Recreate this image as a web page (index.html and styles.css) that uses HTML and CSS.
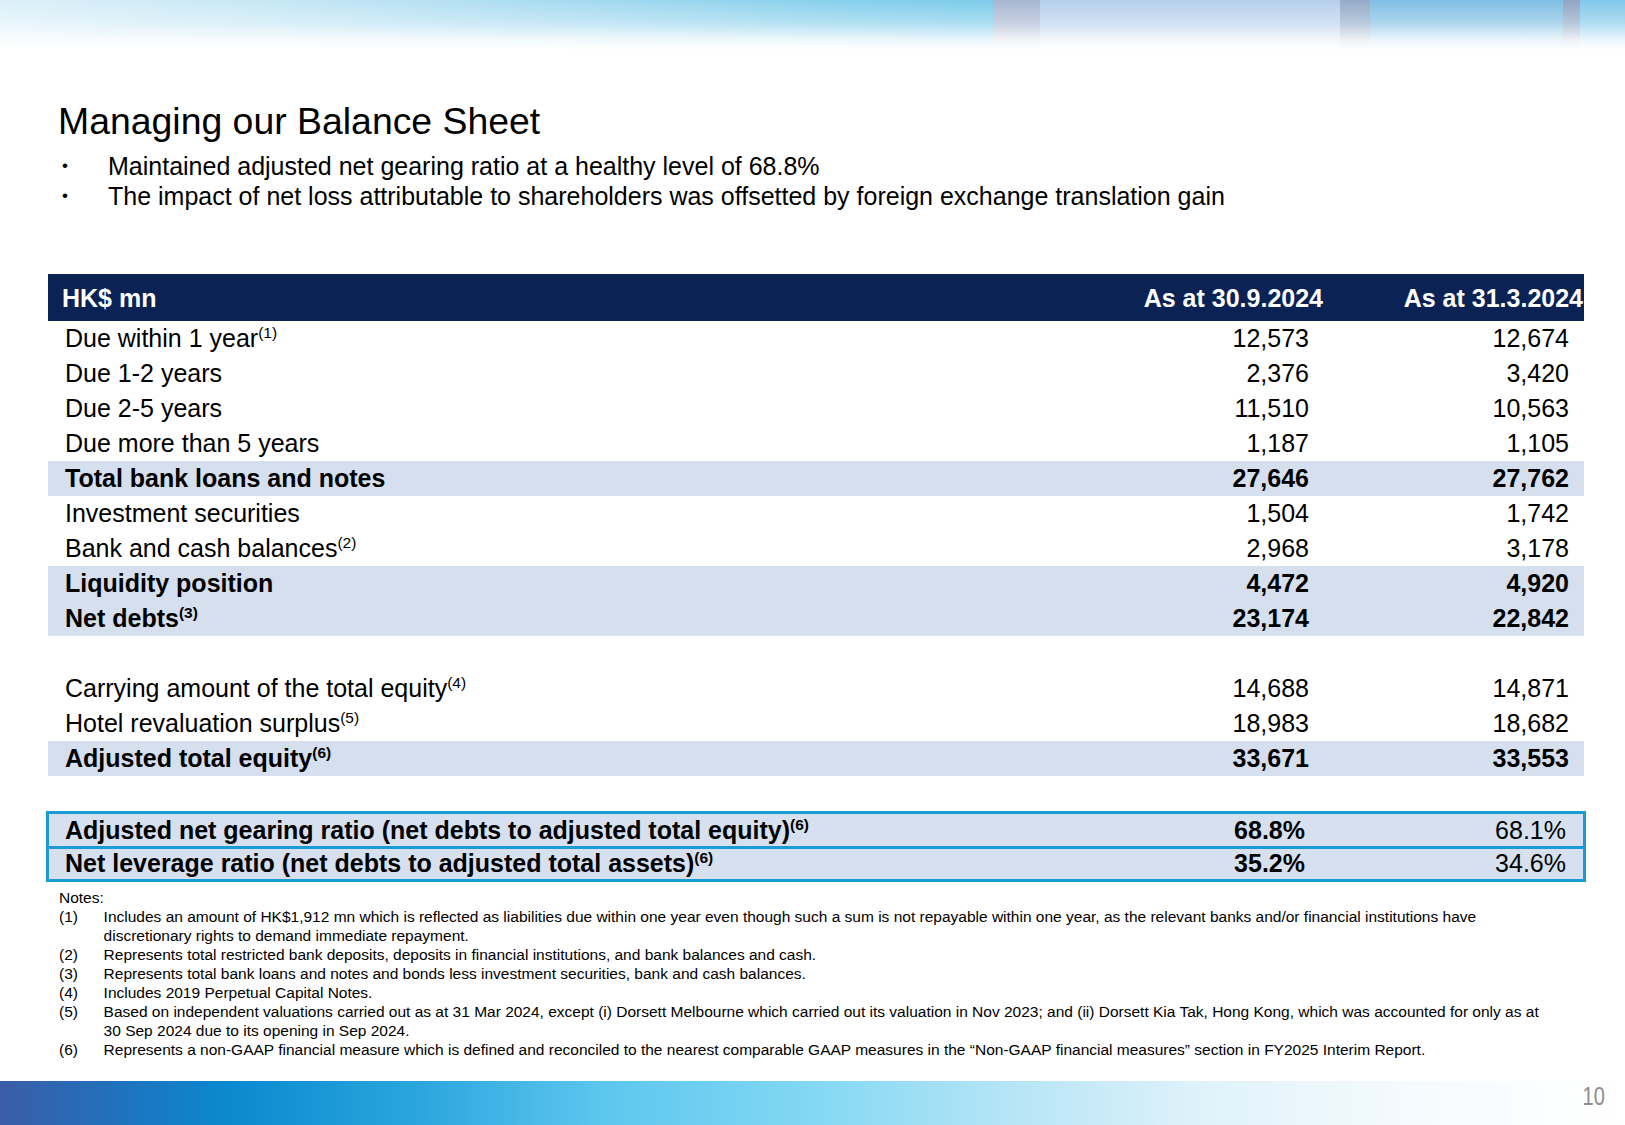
FILE: index.html
```html
<!DOCTYPE html>
<html lang="en">
<head>
<meta charset="utf-8">
<title>Managing our Balance Sheet</title>
<link rel="stylesheet" href="styles.css">
</head>
<body>
<div class="slide">
  <header class="banner"></header>

  <main class="main">
    <h1 class="title">Managing our Balance Sheet</h1>
    <ul class="bullets">
      <li><span class="dot">•</span><span>Maintained adjusted net gearing ratio at a healthy level of 68.8%</span></li>
      <li><span class="dot">•</span><span>The impact of net loss attributable to shareholders was offsetted by foreign exchange translation gain</span></li>
    </ul>

    <section class="table">
      <div class="row head">
        <div class="cell label">HK$ mn</div>
        <div class="cell num">As at 30.9.2024</div>
        <div class="cell num">As at 31.3.2024</div>
      </div>
      <div class="row"><div class="cell label">Due within 1 year<sup>(1)</sup></div><div class="cell num">12,573</div><div class="cell num">12,674</div></div>
      <div class="row"><div class="cell label">Due 1-2 years</div><div class="cell num">2,376</div><div class="cell num">3,420</div></div>
      <div class="row"><div class="cell label">Due 2-5 years</div><div class="cell num">11,510</div><div class="cell num">10,563</div></div>
      <div class="row"><div class="cell label">Due more than 5 years</div><div class="cell num">1,187</div><div class="cell num">1,105</div></div>
      <div class="row band bold"><div class="cell label">Total bank loans and notes</div><div class="cell num">27,646</div><div class="cell num">27,762</div></div>
      <div class="row"><div class="cell label">Investment securities</div><div class="cell num">1,504</div><div class="cell num">1,742</div></div>
      <div class="row"><div class="cell label">Bank and cash balances<sup>(2)</sup></div><div class="cell num">2,968</div><div class="cell num">3,178</div></div>
      <div class="row band bold"><div class="cell label">Liquidity position</div><div class="cell num">4,472</div><div class="cell num">4,920</div></div>
      <div class="row band bold"><div class="cell label">Net debts<sup>(3)</sup></div><div class="cell num">23,174</div><div class="cell num">22,842</div></div>
      <div class="row spacer"></div>
      <div class="row"><div class="cell label">Carrying amount of the total equity<sup>(4)</sup></div><div class="cell num">14,688</div><div class="cell num">14,871</div></div>
      <div class="row"><div class="cell label">Hotel revaluation surplus<sup>(5)</sup></div><div class="cell num">18,983</div><div class="cell num">18,682</div></div>
      <div class="row band bold"><div class="cell label">Adjusted total equity<sup>(6)</sup></div><div class="cell num">33,671</div><div class="cell num">33,553</div></div>
    </section>

    <section class="ratios">
      <div class="ratio-row"><div class="cell label b">Adjusted net gearing ratio (net debts to adjusted total equity)<sup>(6)</sup></div><div class="cell num b">68.8%</div><div class="cell num">68.1%</div></div>
      <div class="ratio-row"><div class="cell label b">Net leverage ratio (net debts to adjusted total assets)<sup>(6)</sup></div><div class="cell num b">35.2%</div><div class="cell num">34.6%</div></div>
    </section>

    <section class="notes">
      <div class="notes-head">Notes:</div>
      <div class="note"><span class="nn">(1)</span><span class="nt">Includes an amount of HK$1,912 mn which is reflected as liabilities due within one year even though such a sum is not repayable within one year, as the relevant banks and/or financial institutions have discretionary rights to demand immediate repayment.</span></div>
      <div class="note"><span class="nn">(2)</span><span class="nt">Represents total restricted bank deposits, deposits in financial institutions, and bank balances and cash.</span></div>
      <div class="note"><span class="nn">(3)</span><span class="nt">Represents total bank loans and notes and bonds less investment securities, bank and cash balances.</span></div>
      <div class="note"><span class="nn">(4)</span><span class="nt">Includes 2019 Perpetual Capital Notes.</span></div>
      <div class="note"><span class="nn">(5)</span><span class="nt">Based on independent valuations carried out as at 31 Mar 2024, except (i) Dorsett Melbourne which carried out its valuation in Nov 2023; and (ii) Dorsett Kia Tak, Hong Kong, which was accounted for only as at 30 Sep 2024 due to its opening in Sep 2024.</span></div>
      <div class="note"><span class="nn">(6)</span><span class="nt">Represents a non-GAAP financial measure which is defined and reconciled to the nearest comparable GAAP measures in the “Non-GAAP financial measures” section in FY2025 Interim Report.</span></div>
    </section>
  </main>

  <footer class="footer-bar"><span class="page-no">10</span></footer>
</div>
</body>
</html>
```

FILE: styles.css
```css
* { box-sizing: border-box; }

html, body {
  margin: 0;
  padding: 0;
  background: #ffffff;
}

body {
  font-family: "Liberation Sans", Arial, sans-serif;
  color: #000;
}

.slide {
  width: 1625px;
  height: 1125px;
  display: flex;
  flex-direction: column;
  overflow: hidden;
}

/* top decorative banner */
.banner {
  height: 50px;
  flex: none;
  background:
    linear-gradient(to bottom, rgba(255,255,255,0) 0%, rgba(255,255,255,0.35) 45%, rgba(255,255,255,0.85) 80%, #ffffff 100%),
    linear-gradient(to right,
      #dcf0f9 0px, #c3e6f5 300px, #a3d9f0 600px, #86cfec 850px, #7ccbea 993px,
      #a7b7d1 993px, #a7b7d1 1040px,
      #b6cfec 1040px, #b6cfec 1340px,
      #95abc9 1340px, #95abc9 1370px,
      #80bfe4 1370px, #80bfe4 1563px,
      #8fa6c5 1563px, #8fa6c5 1580px,
      #82c8ea 1580px, #82c8ea 1625px);
}

.main {
  flex: 1;
  padding: 0 40px 0 48px;
}

.title {
  margin: 49px 0 0 10px;
  font-weight: normal;
  font-size: 37.4px;
  line-height: 44px;
  height: 44px;
}

.bullets {
  list-style: none;
  margin: 8px 0 0 14px;
  padding: 0;
  font-size: 25px;
  line-height: 30px;
}

.bullets li {
  display: grid;
  grid-template-columns: 46px 1fr;
}

.bullets .dot {
  font-size: 17px;
}

/* table */
.table {
  margin-top: 63px;
  width: 1536px;
  font-size: 25px;
}

.row, .ratio-row {
  display: grid;
  grid-template-columns: 1016px 260px 260px;
  height: 35px;
  align-items: center;
}

.row.head {
  height: 47px;
  padding-top: 2px;
  background: #0b2354;
  color: #fff;
  font-weight: bold;
  font-size: 25px;
}

.row.head .label {
  padding-left: 14px;
}

.row.head .num {
  padding-right: 1px;
}

.row.band {
  background: #d5dfed;
}

.row.bold {
  font-weight: bold;
}

.row.spacer {
  height: 35px;
}

.cell.label {
  padding-left: 17px;
  white-space: nowrap;
}

.cell.num {
  text-align: right;
  padding-right: 15px;
  white-space: nowrap;
}

sup {
  font-size: 15.5px;
  line-height: 0;
  vertical-align: 9px;
}

/* ratio box */
.ratios {
  margin-top: 35px;
  margin-left: -2px;
  width: 1540px;
  border: 3px solid #1a9bd3;
  background: #d6e0ee;
  font-size: 25px;
}

.ratio-row {
  grid-template-columns: 1015px 260px 259px;
  height: 32px;
}

.ratio-row + .ratio-row {
  border-top: 3px solid #1a9bd3;
  height: 32.5px;
}

.ratio-row .label {
  padding-left: 16px;
}

.ratio-row .num {
  padding-right: 19px;
}

.ratio-row .num:last-child {
  padding-right: 17px;
}

.b { font-weight: bold; }

/* notes */
.notes {
  margin-top: 6px;
  margin-left: 11px;
  font-size: 15.5px;
  line-height: 19px;
  width: 1496px;
}

.note {
  display: grid;
  grid-template-columns: 44.6px 1fr;
}

/* footer */
.footer-bar {
  flex: none;
  height: 44px;
  background: linear-gradient(to right,
    #3b5da7 0px, #2170bb 110px, #0b89cf 230px, #2ba6de 420px,
    #5cc6ee 600px, #80d7f3 800px, #b3e4f6 1000px, #dff2fa 1200px,
    #f6fbfe 1420px, #ffffff 1625px);
  display: flex;
  justify-content: flex-end;
  align-items: flex-start;
}

.page-no {
  margin: 1px 20px 0 0;
  font-size: 25px;
  line-height: 28px;
  color: #8c8c8c;
  transform: scaleX(0.8);
  transform-origin: right center;
}
```
